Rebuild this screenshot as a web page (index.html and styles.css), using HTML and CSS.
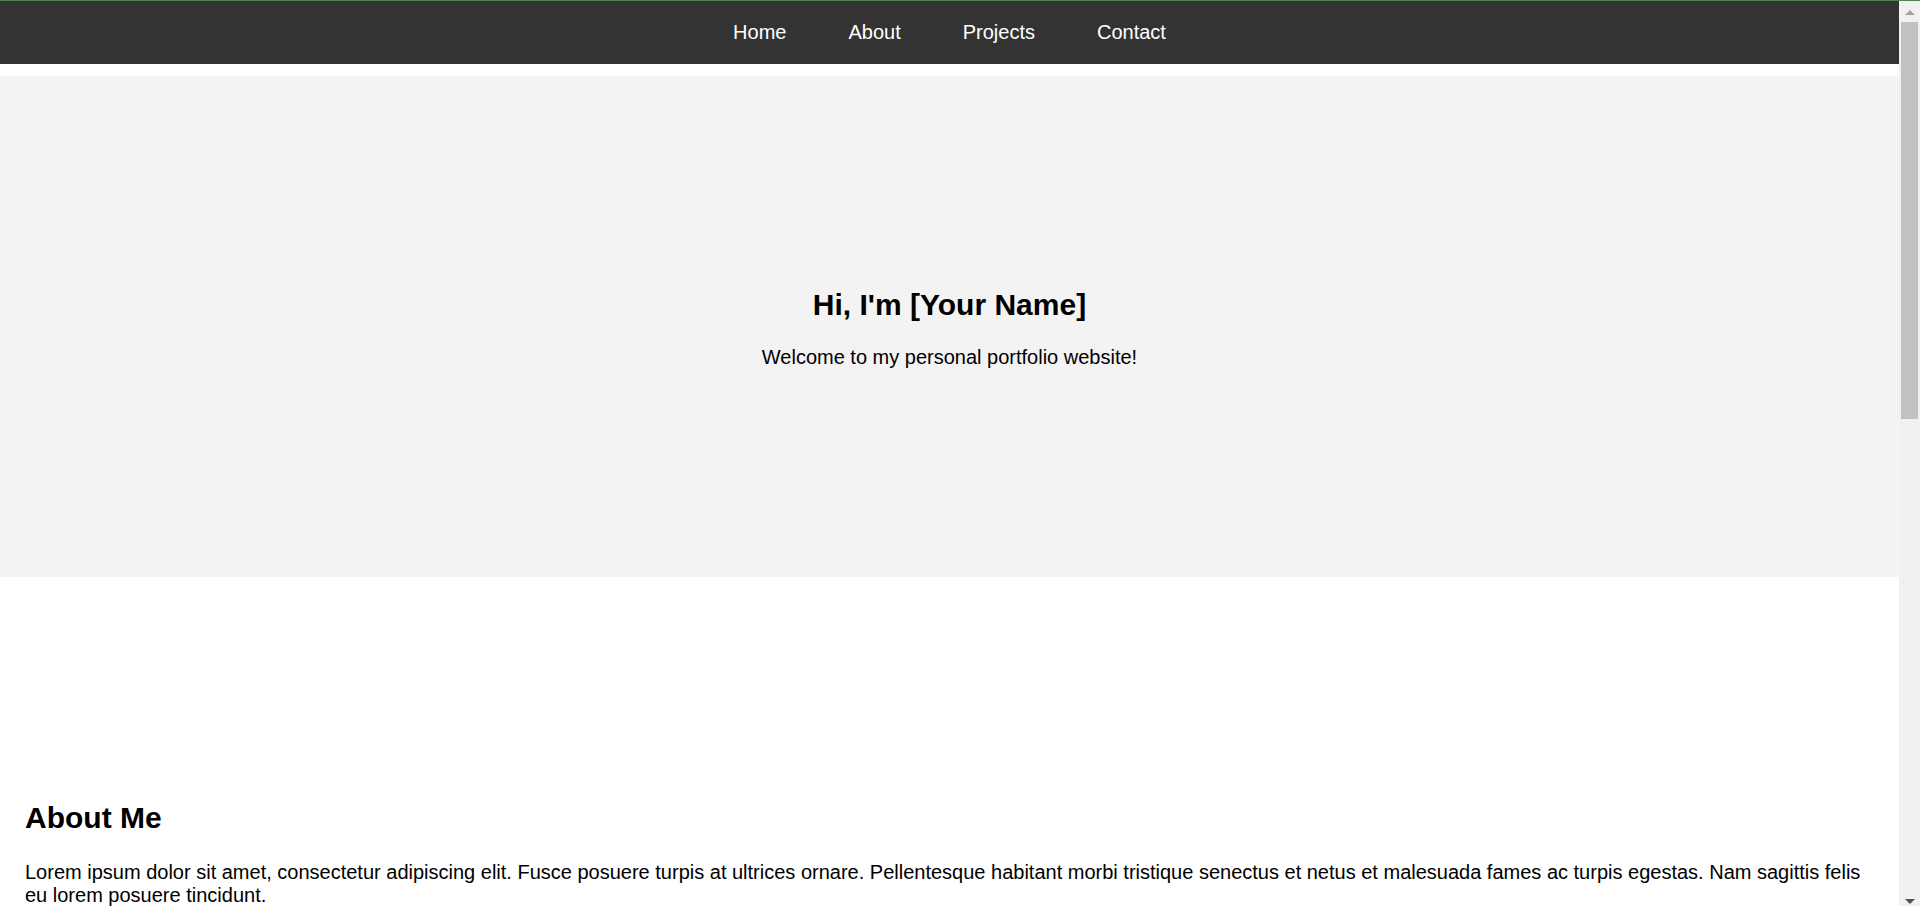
FILE: index.html
```html
<!DOCTYPE html>
<html lang="en">
<head>
<meta charset="utf-8">
<title>Portfolio</title>
<link rel="stylesheet" href="styles.css">
</head>
<body>
<header class="site-header">
  <nav class="nav">
    <a class="nav-link" href="#home">Home</a>
    <a class="nav-link" href="#about">About</a>
    <a class="nav-link" href="#projects">Projects</a>
    <a class="nav-link" href="#contact">Contact</a>
  </nav>
</header>
<main>
  <section class="hero" id="home">
    <h2 class="hero-title">Hi, I'm [Your Name]</h2>
    <p class="hero-text">Welcome to my personal portfolio website!</p>
  </section>
  <section class="about" id="about">
    <h2 class="section-title">About Me</h2>
    <p class="section-text">Lorem ipsum dolor sit amet, consectetur adipiscing elit. Fusce posuere turpis at ultrices ornare. Pellentesque habitant morbi tristique senectus et netus et malesuada fames ac turpis egestas. Nam sagittis felis eu lorem posuere tincidunt.</p>
  </section>
</main>
<div class="scrollbar" aria-hidden="true">
  <span class="sb-btn sb-up"><span class="sb-arrow-up"></span></span>
  <span class="sb-track"><span class="sb-thumb"></span></span>
  <span class="sb-btn sb-down"><span class="sb-arrow-down"></span></span>
</div>
</body>
</html>
```

FILE: styles.css
```css
html {
  background: #ffffff;
  border-top: 1px solid #508250;
}

::-webkit-scrollbar {
  width: 0;
  height: 0;
}

body {
  margin: 0;
  padding-right: 21px;
  font-family: "Liberation Sans", Arial, sans-serif;
  font-size: 20px;
  color: #000000;
}

.site-header {
  background: #333333;
  height: 63px;
  display: flex;
  align-items: center;
  justify-content: center;
}

.nav {
  display: flex;
  gap: 62px;
}

.nav-link {
  color: #ffffff;
  text-decoration: none;
  font-size: 20px;
  line-height: 23px;
}

.hero {
  margin-top: 12px;
  background: #f3f3f3;
  padding: 187px 0 188px;
  text-align: center;
}

.hero-title {
  font-size: 30px;
  font-weight: bold;
  margin: 25px 0 24px;
}

.hero-text {
  font-size: 20px;
  margin: 0 0 20px;
}

.about {
  box-sizing: border-box;
  min-height: 1394px;
  padding: 199px 25px 25px;
}

.section-title {
  font-size: 30px;
  font-weight: bold;
  margin: 25px 0 26px;
}

.section-text {
  font-size: 20px;
  margin: 0;
}

/* window scrollbar chrome */
.scrollbar {
  position: fixed;
  top: 1px;
  right: 0;
  bottom: 0;
  width: 21px;
  background: #f1f1f1;
  display: flex;
  flex-direction: column;
}

.sb-btn {
  height: 21px;
  flex: none;
  display: flex;
  justify-content: center;
  box-sizing: border-box;
}

.sb-up {
  padding-top: 9px;
}

.sb-down {
  padding-top: 14px;
}

.sb-arrow-up {
  width: 0;
  height: 0;
  border-left: 5px solid transparent;
  border-right: 5px solid transparent;
  border-bottom: 5px solid #a3a3a3;
}

.sb-arrow-down {
  width: 0;
  height: 0;
  border-left: 5px solid transparent;
  border-right: 5px solid transparent;
  border-top: 5px solid #505050;
}

.sb-track {
  flex: 1;
  display: block;
  padding: 0 2px;
}

.sb-thumb {
  display: block;
  height: 397px;
  background: #c1c1c1;
}
```
